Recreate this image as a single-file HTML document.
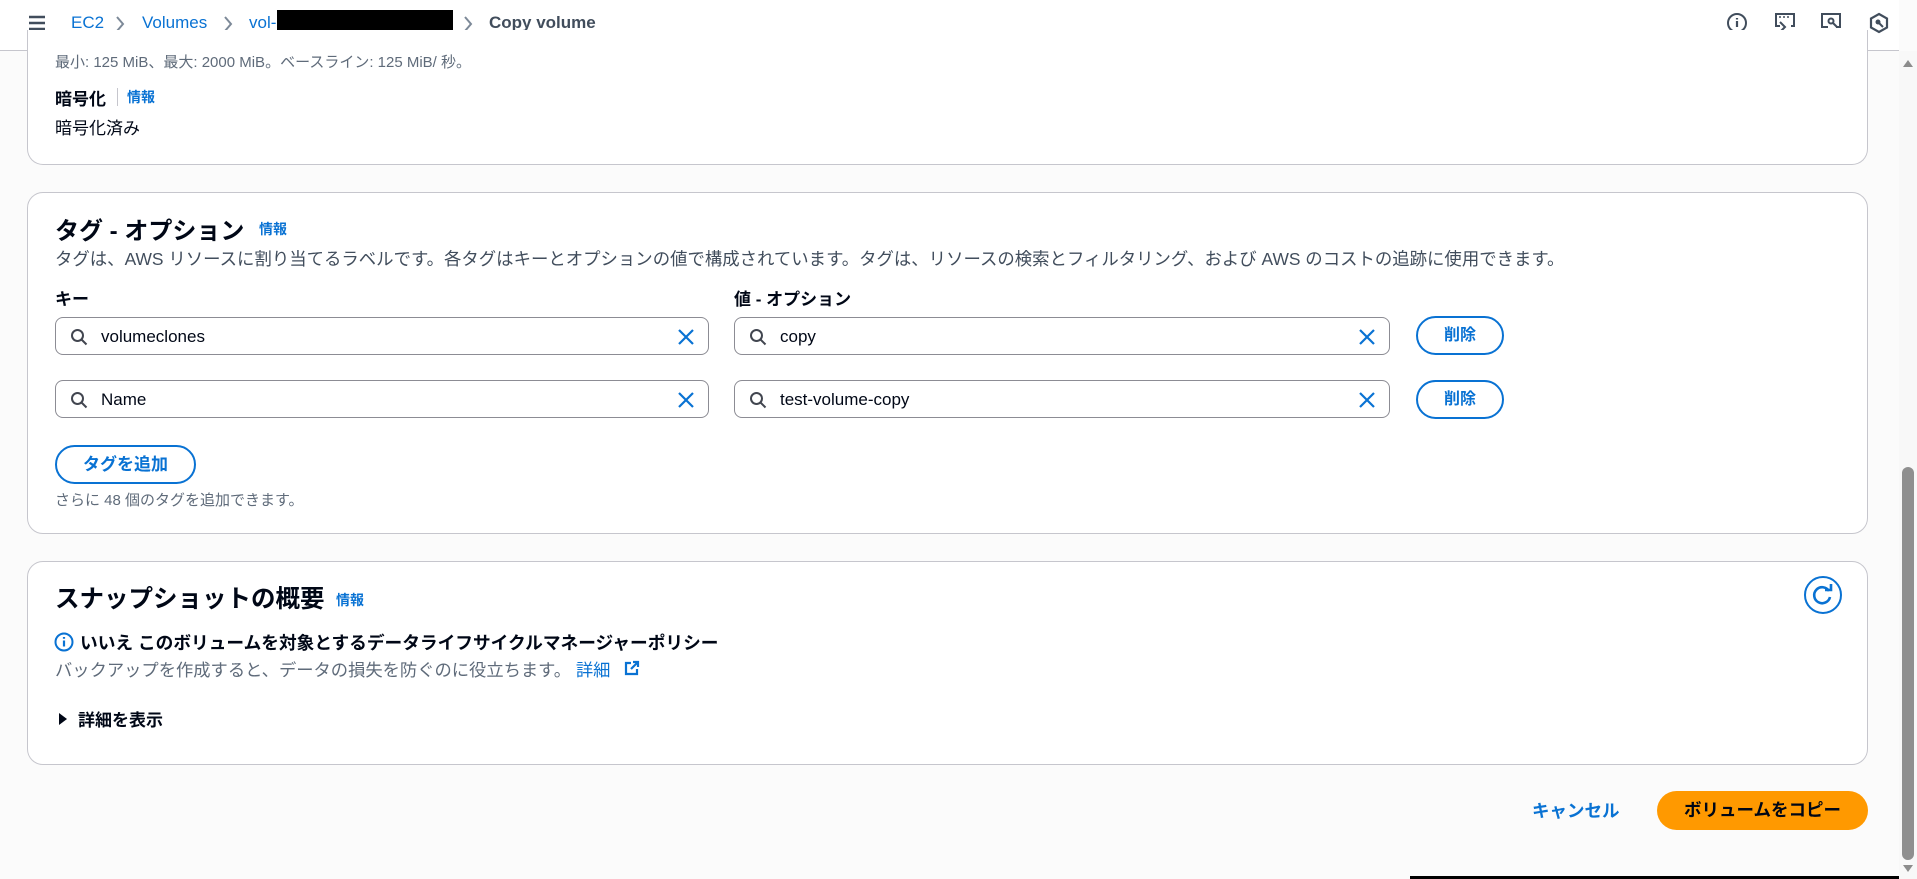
<!DOCTYPE html>
<html><head><meta charset="utf-8">
<style>
*{box-sizing:border-box;margin:0;padding:0}
html,body{width:1917px;height:879px;overflow:hidden;background:#fbfbfb;font-family:"Liberation Sans","Noto Sans CJK JP",sans-serif;color:#000716}
.a{position:absolute;white-space:nowrap}
.hdr{position:absolute;left:0;top:0;width:1899px;height:51px;background:#fff;border-bottom:1px solid #c6c6cd}
.lnk{color:#0972d3}
.bc{font-size:17px;top:13px;text-decoration:underline;text-underline-offset:4px}
.chev{top:14px}
.panel{position:absolute;left:27px;width:1841px;background:#fff;border:1px solid #c6c6cd;border-radius:16px}
.inp{position:absolute;height:38px;border:1px solid #8c8c94;border-radius:8px;background:#fff}
.inp .t{position:absolute;left:45px;top:0;line-height:38px;font-size:17px}
.inp svg.s{position:absolute;left:14px;top:10px}
.inp svg.x{position:absolute;right:14px;top:11px}
.btn{position:absolute;border:2px solid #0972d3;border-radius:20px;color:#0972d3;font-weight:bold;font-size:16px;text-align:center;background:#fff}
</style></head><body>
<div class="hdr"></div>
<svg class="a" style="left:28px;top:15px" width="18" height="16" viewBox="0 0 18 16"><path d="M1 2h16M1 8h16M1 14h16" stroke="#414d5c" stroke-width="2.4"/></svg>
<div class="a bc lnk" style="left:71px">EC2</div>
<svg class="a chev" style="left:114px" width="12" height="20" viewBox="0 0 12 20"><path d="M3 3l6 7-6 7" fill="none" stroke="#7d8998" stroke-width="2"/></svg>
<div class="a bc lnk" style="left:142px">Volumes</div>
<svg class="a chev" style="left:222px" width="12" height="20" viewBox="0 0 12 20"><path d="M3 3l6 7-6 7" fill="none" stroke="#7d8998" stroke-width="2"/></svg>
<div class="a bc lnk" style="left:249px">vol-</div>
<div class="a" style="left:277px;top:10px;width:176px;height:28px;background:#000"></div>
<svg class="a chev" style="left:462px" width="12" height="20" viewBox="0 0 12 20"><path d="M3 3l6 7-6 7" fill="none" stroke="#7d8998" stroke-width="2"/></svg>
<div class="a" style="left:489px;top:13px;font-size:17px;font-weight:bold;color:#414d5c">Copy volume</div>
<svg class="a" style="left:1726px;top:12px" width="22" height="22" viewBox="0 0 22 22"><circle cx="11" cy="11" r="9" fill="none" stroke="#414d5c" stroke-width="2"/><path d="M11 9v6M11 6v1.5" stroke="#414d5c" stroke-width="2.2"/></svg>
<svg class="a" style="left:1774px;top:12px" width="22" height="22" viewBox="0 0 22 22"><path d="M6 14H2V2h18v12h-3" fill="none" stroke="#414d5c" stroke-width="2"/><path d="M5 5h2M9 5h2M13 5h2" stroke="#414d5c" stroke-width="1.5"/><path d="M6 10l5 5-5 5M12 20h8" fill="none" stroke="#414d5c" stroke-width="2"/></svg>
<svg class="a" style="left:1820px;top:12px" width="22" height="22" viewBox="0 0 22 22"><path d="M8 15H2V2h18v13h-4M2 20h18" fill="none" stroke="#414d5c" stroke-width="2"/><circle cx="11" cy="9" r="2.5" fill="none" stroke="#414d5c" stroke-width="2"/><path d="M13 11l4 4" stroke="#414d5c" stroke-width="2"/></svg>
<svg class="a" style="left:1868px;top:12px" width="22" height="22" viewBox="0 0 22 22"><path d="M11 2l8 4.5v9L11 20l-8-4.5v-9z" fill="none" stroke="#414d5c" stroke-width="2.2"/><circle cx="10" cy="10" r="2.5" fill="#414d5c"/><path d="M11 11l4 4" stroke="#414d5c" stroke-width="2"/></svg>

<div class="a" style="left:1899px;top:51px;width:18px;height:828px;background:#f8f8f8"></div>
<svg class="a" style="left:1902px;top:58px" width="12" height="10"><path d="M1 9L6 2l5 7z" fill="#8c8c8c"/></svg>
<div class="a" style="left:1902px;top:467px;width:12px;height:393px;background:#8f8f8f;border-radius:6px"></div>
<svg class="a" style="left:1902px;top:864px" width="12" height="10"><path d="M1 1h10L6 8z" fill="#8c8c8c"/></svg>
<div class="a" style="left:1410px;top:876px;width:489px;height:3px;background:#000"></div>

<div class="panel" style="top:30px;height:135px;border-top:none;border-radius:0 0 16px 16px"></div>
<div class="a" style="left:55px;top:51px;font-size:15px;color:#5f6b7a">最小: 125 MiB、最大: 2000 MiB。ベースライン: 125 MiB/ 秒。</div>
<div class="a" style="left:55px;top:85px;font-size:17px;font-weight:bold">暗号化</div>
<div class="a" style="left:117px;top:88px;width:1px;height:18px;background:#c6c6cd"></div>
<div class="a lnk" style="left:127px;top:87px;font-size:14px;font-weight:bold">情報</div>
<div class="a" style="left:55px;top:114px;font-size:17px">暗号化済み</div>

<div class="panel" style="top:192px;height:342px"></div>
<div class="a" style="left:55px;top:211px;font-size:24px;font-weight:bold">タグ - オプション</div>
<div class="a lnk" style="left:259px;top:219px;font-size:14px;font-weight:bold">情報</div>
<div class="a" style="left:55px;top:246px;font-size:17.4px;color:#414d5c">タグは、AWS リソースに割り当てるラベルです。各タグはキーとオプションの値で構成されています。タグは、リソースの検索とフィルタリング、および AWS のコストの追跡に使用できます。</div>
<div class="a" style="left:55px;top:285px;font-size:17px;font-weight:bold">キー</div>
<div class="a" style="left:734px;top:285px;font-size:17px;font-weight:bold">値 - オプション</div>

<div class="inp" style="left:55px;top:317px;width:654px"><svg class="s" width="18" height="18" viewBox="0 0 18 18"><circle cx="7.5" cy="7.5" r="5.5" fill="none" stroke="#424650" stroke-width="2"/><path d="M11.5 11.5l5 5" stroke="#424650" stroke-width="2"/></svg><div class="t">volumeclones</div><svg class="x" width="16" height="16" viewBox="0 0 16 16"><path d="M1 1l14 14M15 1L1 15" stroke="#0972d3" stroke-width="2.2"/></svg></div>
<div class="inp" style="left:734px;top:317px;width:656px"><svg class="s" width="18" height="18" viewBox="0 0 18 18"><circle cx="7.5" cy="7.5" r="5.5" fill="none" stroke="#424650" stroke-width="2"/><path d="M11.5 11.5l5 5" stroke="#424650" stroke-width="2"/></svg><div class="t">copy</div><svg class="x" width="16" height="16" viewBox="0 0 16 16"><path d="M1 1l14 14M15 1L1 15" stroke="#0972d3" stroke-width="2.2"/></svg></div>
<div class="btn" style="left:1416px;top:316px;width:88px;height:39px;line-height:35px">削除</div>

<div class="inp" style="left:55px;top:380px;width:654px"><svg class="s" width="18" height="18" viewBox="0 0 18 18"><circle cx="7.5" cy="7.5" r="5.5" fill="none" stroke="#424650" stroke-width="2"/><path d="M11.5 11.5l5 5" stroke="#424650" stroke-width="2"/></svg><div class="t">Name</div><svg class="x" width="16" height="16" viewBox="0 0 16 16"><path d="M1 1l14 14M15 1L1 15" stroke="#0972d3" stroke-width="2.2"/></svg></div>
<div class="inp" style="left:734px;top:380px;width:656px"><svg class="s" width="18" height="18" viewBox="0 0 18 18"><circle cx="7.5" cy="7.5" r="5.5" fill="none" stroke="#424650" stroke-width="2"/><path d="M11.5 11.5l5 5" stroke="#424650" stroke-width="2"/></svg><div class="t">test-volume-copy</div><svg class="x" width="16" height="16" viewBox="0 0 16 16"><path d="M1 1l14 14M15 1L1 15" stroke="#0972d3" stroke-width="2.2"/></svg></div>
<div class="btn" style="left:1416px;top:380px;width:88px;height:39px;line-height:35px">削除</div>

<div class="btn" style="left:55px;top:445px;width:141px;height:39px;line-height:35px;font-size:17px">タグを追加</div>
<div class="a" style="left:55px;top:489px;font-size:15px;color:#5f6b7a">さらに 48 個のタグを追加できます。</div>

<div class="panel" style="top:561px;height:204px"></div>
<div class="a" style="left:55px;top:580px;font-size:24.5px;font-weight:bold">スナップショットの概要</div>
<div class="a lnk" style="left:336px;top:590px;font-size:14px;font-weight:bold">情報</div>
<svg class="a" style="left:1803px;top:575px" width="40" height="40" viewBox="0 0 40 40"><circle cx="20" cy="20" r="18" fill="none" stroke="#0972d3" stroke-width="2"/><path d="M26 16a8 8 0 1 0 1 6" fill="none" stroke="#0972d3" stroke-width="2.6"/><path d="M22 15h6V9" fill="none" stroke="#0972d3" stroke-width="2.6"/></svg>
<svg class="a" style="left:54px;top:632px" width="20" height="20" viewBox="0 0 20 20"><circle cx="10" cy="10" r="8.5" fill="none" stroke="#0972d3" stroke-width="2"/><path d="M10 8.5v6M10 5v1.8" stroke="#0972d3" stroke-width="2.2"/></svg>
<div class="a" style="left:80px;top:629px;font-size:17.7px;font-weight:bold">いいえ このボリュームを対象とするデータライフサイクルマネージャーポリシー</div>
<div class="a" style="left:55px;top:656px;font-size:17.3px;color:#5f6b7a">バックアップを作成すると、データの損失を防ぐのに役立ちます。 <span class="lnk">詳細</span></div>
<svg class="a" style="left:624px;top:660px" width="16" height="16" viewBox="0 0 16 16"><path d="M7 3H2v11h11V9" fill="none" stroke="#0972d3" stroke-width="2.2"/><path d="M7 9l7-7M9 2h5v5" fill="none" stroke="#0972d3" stroke-width="2.2"/></svg>
<svg class="a" style="left:58px;top:712px" width="10" height="14"><path d="M1 1l8 6-8 6z" fill="#000716"/></svg>
<div class="a" style="left:78px;top:706px;font-size:17px;font-weight:bold">詳細を表示</div>

<div class="a lnk" style="left:1532px;top:798px;font-size:17.5px;font-weight:bold">キャンセル</div>
<div class="a" style="left:1657px;top:791px;width:211px;height:39px;background:#ff9900;border-radius:20px;font-size:17.5px;font-weight:bold;text-align:center;line-height:39px">ボリュームをコピー</div>
</body></html>
